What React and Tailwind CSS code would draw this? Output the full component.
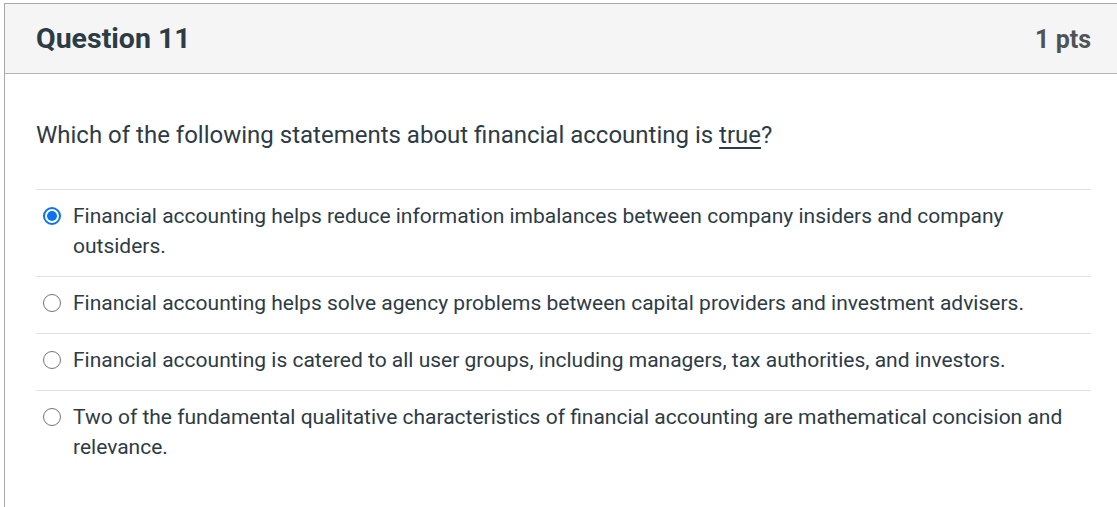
import React from 'react';

const answers = [
  { text: 'Financial accounting helps reduce information imbalances between company insiders and company outsiders.', checked: true },
  { text: 'Financial accounting helps solve agency problems between capital providers and investment advisers.' },
  { text: 'Financial accounting is catered to all user groups, including managers, tax authorities, and investors.' },
  { text: 'Two of the fundamental qualitative characteristics of financial accounting are mathematical concision and relevance.' },
];

const Radio = ({ checked }) =>
  checked ? (
    <span className="mt-[6px] flex h-[18px] w-[18px] shrink-0 items-center justify-center rounded-full border-2 border-[#0b73f0]">
      <span className="h-[10px] w-[10px] rounded-full bg-[#0b73f0]" />
    </span>
  ) : (
    <span className="mt-[6px] h-[18px] w-[18px] shrink-0 rounded-full border-[1.5px] border-[#757575]" />
  );

export default function App() {
  return (
    <div className="min-h-screen bg-white pl-[4px] pt-[3px]" style={{ fontFamily: 'Roboto, "Noto Sans", sans-serif' }}>
      <div className="w-[1130px] min-h-[504px] border-l border-t border-[#a8a8a8] text-[#2d3b45]">
        <div className="flex h-[70px] items-center border-b border-[#b5b5b5] bg-[#f5f5f5] pl-[31px] pt-[1px]">
          <div className="flex w-[1055px] items-center justify-between">
            <h2 className="text-[28.5px] font-bold leading-none">Question 11</h2>
            <span className="text-[25px] font-bold leading-none text-[#4e5357]">1 pts</span>
          </div>
        </div>

        <div className="pl-[31px]">
          <div className="w-[1055px]">
            <p className="pt-[46px] pb-[39px] text-[24px] leading-[30px]">
              Which of the following statements about financial accounting is{' '}
              <span className="underline decoration-[1.5px] underline-offset-[4px]">true</span>?
            </p>

            {answers.map((a, i) => (
              <div key={i} className="flex gap-[12px] border-t border-[#e2e2e2] pt-[11px] pb-[15px] pl-[7px]">
                <Radio checked={a.checked} />
                <span className="text-[21px] leading-[30px]">{a.text}</span>
              </div>
            ))}
          </div>
        </div>
      </div>
    </div>
  );
}
